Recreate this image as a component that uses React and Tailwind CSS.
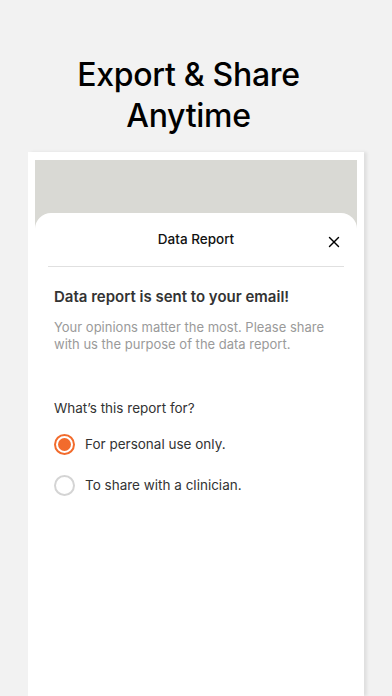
import { X } from "lucide-react";

const options = [
  { label: "For personal use only.", selected: true },
  { label: "To share with a clinician.", selected: false },
];

export default function App() {
  return (
    <div
      className="w-[392px] h-[696px] overflow-hidden bg-[#f2f2f2] flex flex-col items-center"
      style={{ fontFamily: "Inter, 'Noto Sans', sans-serif" }}
    >
      <h1 className="mt-[54px] mr-[15px] text-[32px] leading-[41px] font-medium text-black text-center tracking-[-0.3px]">
        Export &amp; Share
        <br />
        Anytime
      </h1>

      {/* phone frame */}
      <div className="mt-[16px] w-[336px] flex-1 bg-white px-[7px] pt-[8px] shadow-[3px_0_3px_rgba(0,0,0,0.08)] flex flex-col">
        <div className="flex-1 bg-[#d9d9d4] flex flex-col">
          <div className="h-[53px]" />
          <div className="flex-1 bg-white rounded-t-[16px] px-[13px]">
            <div className="relative h-[54px] flex items-center justify-center border-b border-[#e0e0e0]">
              <span className="text-[13.5px] font-medium text-[#111]">Data Report</span>
              <X className="absolute right-[1px] top-[20px] w-[18px] h-[18px] text-black" strokeWidth={1.9} />
            </div>

            <div className="px-[6px]">
              <p className="mt-[20px] text-[15px] leading-[20px] font-semibold text-[#333]">
                Data report is sent to your email!
              </p>
              <p className="mt-[12px] text-[13px] leading-[17px] text-[#9a9a9a]">
                Your opinions matter the most. Please share with us the purpose of the data report.
              </p>

              <p className="mt-[46px] text-[13.5px] leading-[18px] text-[#333]">What’s this report for?</p>

              <div className="mt-[16px] flex flex-col gap-[19px]">
                {options.map((o) => (
                  <div key={o.label} className="flex items-center gap-[10px]">
                    {o.selected ? (
                      <span className="w-[21px] h-[21px] rounded-full border-2 border-[#f26b2c] flex items-center justify-center">
                        <span className="w-[13px] h-[13px] rounded-full bg-[#f26b2c]" />
                      </span>
                    ) : (
                      <span className="w-[21px] h-[21px] rounded-full border-2 border-[#d4d4d4]" />
                    )}
                    <span className="text-[13.5px] leading-[22px] text-[#333]">{o.label}</span>
                  </div>
                ))}
              </div>
            </div>
          </div>
        </div>
      </div>
    </div>
  );
}
